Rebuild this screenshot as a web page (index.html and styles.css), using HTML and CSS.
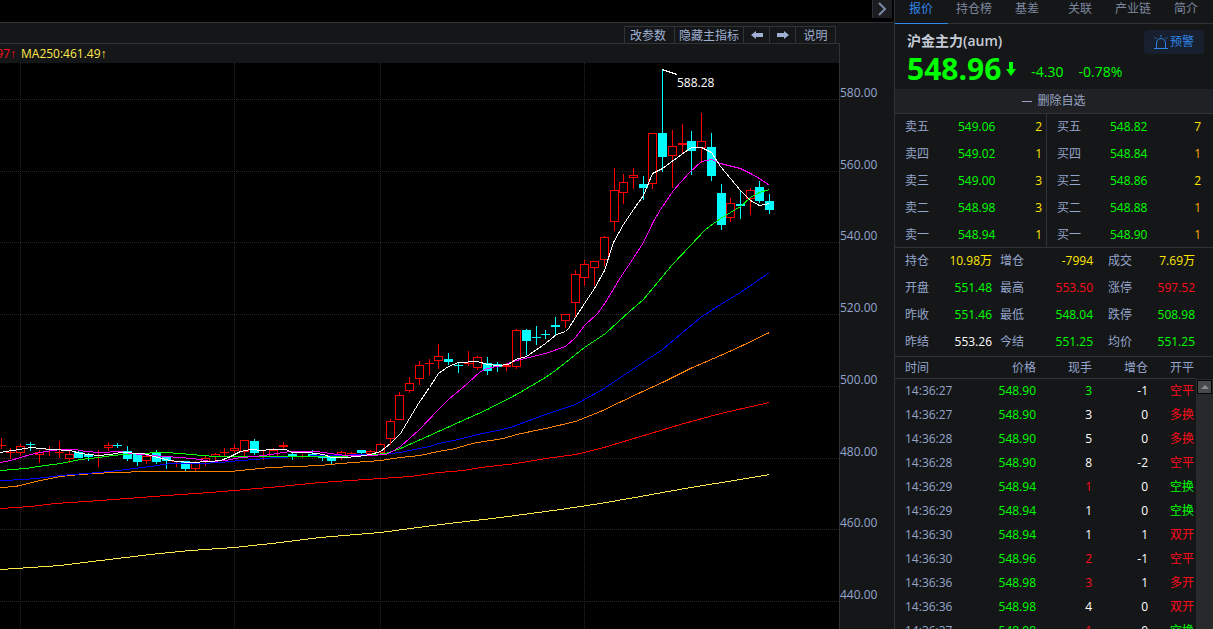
FILE: index.html
```html
<!DOCTYPE html>
<html lang="zh-CN">
<head>
<meta charset="utf-8">
<title>沪金主力(aum)</title>
<link rel="stylesheet" href="styles.css">
</head>
<body>
<main class="market">
  <div class="topbar">
    <button class="collapse" type="button" aria-label="收起">
      <svg width="10" height="14" viewBox="0 0 10 14"><path d="M1 1l6 6-6 6" fill="none" stroke="currentColor" stroke-width="2"/></svg>
    </button>
  </div>
  <div class="workspace">
    <section class="board">
      <div class="toolbar">
        <button type="button">改参数</button>
        <button type="button">隐藏主指标</button>
        <button class="arrow" type="button" aria-label="向左">
          <svg width="12" height="8" viewBox="0 0 12 8"><path d="M0 4l5-4v2h7v4H5v2z" fill="currentColor"/></svg>
        </button>
        <button class="arrow" type="button" aria-label="向右">
          <svg width="12" height="8" viewBox="0 0 12 8"><path d="M12 4L7 0v2H0v4h7v2z" fill="currentColor"/></svg>
        </button>
        <button class="help" type="button">说明</button>
      </div>
      <div class="legend">
        <span class="legend-cut up">97<i>↑</i></span>
        <span class="ma250">MA250:461.49<i>↑</i></span>
      </div>
      <div class="plot">
        <svg id="chart" class="chart" viewBox="0 63 839 566" preserveAspectRatio="xMaxYMin slice" role="img" aria-label="K线图">
          <g class="grid">
            <path d="M0 99.5H839M0 171.5H839M0 242.5H839M0 314.5H839M0 386.5H839M0 458.5H839M0 529.5H839M0 601.5H839"/>
            <path d="M20.5 63V629M234.5 63V629M380.5 63V629M584.5 63V629"/>
          </g>
          <g id="candles"></g>
          <g id="averages" class="averages"></g>
          <path class="peak-line" d="M662 69.5L677 74.5"/>
          <text class="peak-text" x="677" y="87">588.28</text>
        </svg>
      </div>
    </section>
    <div class="axis">
      <span>580.00</span><span>560.00</span><span>540.00</span><span>520.00</span>
      <span>500.00</span><span>480.00</span><span>460.00</span><span>440.00</span>
    </div>
  </div>
</main>

<aside class="panel">
  <nav class="tabs">
    <a class="active" href="#">报价</a><a href="#">持仓榜</a><a href="#">基差</a><a href="#">关联</a><a href="#">产业链</a><a href="#">简介</a>
  </nav>
  <header class="quote">
    <div class="quote-top">
      <h1>沪金主力(aum)</h1>
      <button class="alert" type="button">
        <svg width="14" height="14" viewBox="0 0 14 14" fill="none" stroke="currentColor"><path d="M0 13.500h14M2.500 13V8a4.500 4.500 0 0 1 9 0V13M7 0v2M1 2.500l1.500 1.500M13 2.500L11.500 4"/></svg>
        <span>预警</span>
      </button>
    </div>
    <div class="quote-price">
      <strong>548.96</strong>
      <svg width="10" height="14" viewBox="0 0 10 14"><path d="M3 0h4v7h3l-5 7-5-7h3z" fill="currentColor"/></svg>
      <span class="change">-4.30</span>
      <span class="change">-0.78%</span>
    </div>
  </header>
  <button class="remove" type="button"><span class="dash"></span>删除自选</button>

  <div class="depth">
    <table>
      <tr><th>卖五</th><td class="down">549.06</td><td class="vol">2</td></tr>
      <tr><th>卖四</th><td class="down">549.02</td><td class="vol">1</td></tr>
      <tr><th>卖三</th><td class="down">549.00</td><td class="vol">3</td></tr>
      <tr><th>卖二</th><td class="down">548.98</td><td class="vol">3</td></tr>
      <tr><th>卖一</th><td class="down">548.94</td><td class="vol">1</td></tr>
    </table>
    <table>
      <tr><th>买五</th><td class="down">548.82</td><td class="vol">7</td></tr>
      <tr><th>买四</th><td class="down">548.84</td><td class="vol amber">1</td></tr>
      <tr><th>买三</th><td class="down">548.86</td><td class="vol">2</td></tr>
      <tr><th>买二</th><td class="down">548.88</td><td class="vol amber">1</td></tr>
      <tr><th>买一</th><td class="down">548.90</td><td class="vol amber">1</td></tr>
    </table>
  </div>

  <dl class="stats">
    <div><dt>持仓</dt><dd class="vol">10.98万</dd></div>
    <div><dt>增仓</dt><dd class="vol">-7994</dd></div>
    <div><dt>成交</dt><dd class="vol">7.69万</dd></div>
    <div><dt>开盘</dt><dd class="down">551.48</dd></div>
    <div><dt>最高</dt><dd class="up">553.50</dd></div>
    <div><dt>涨停</dt><dd class="up">597.52</dd></div>
    <div><dt>昨收</dt><dd class="down">551.46</dd></div>
    <div><dt>最低</dt><dd class="down">548.04</dd></div>
    <div><dt>跌停</dt><dd class="down">508.98</dd></div>
    <div><dt>昨结</dt><dd class="flat">553.26</dd></div>
    <div><dt>今结</dt><dd class="down">551.25</dd></div>
    <div><dt>均价</dt><dd class="down">551.25</dd></div>
  </dl>

  <div class="trades">
    <table>
      <thead>
        <tr><th>时间</th><th>价格</th><th>现手</th><th>增仓</th><th>开平</th></tr>
      </thead>
      <tbody>
        <tr><td>14:36:27</td><td class="down">548.90</td><td class="down">3</td><td>-1</td><td class="up">空平</td></tr>
        <tr><td>14:36:27</td><td class="down">548.90</td><td>3</td><td>0</td><td class="up">多换</td></tr>
        <tr><td>14:36:28</td><td class="down">548.90</td><td>5</td><td>0</td><td class="up">多换</td></tr>
        <tr><td>14:36:28</td><td class="down">548.90</td><td>8</td><td>-2</td><td class="up">空平</td></tr>
        <tr><td>14:36:29</td><td class="down">548.94</td><td class="up">1</td><td>0</td><td class="down">空换</td></tr>
        <tr><td>14:36:29</td><td class="down">548.94</td><td>1</td><td>0</td><td class="down">空换</td></tr>
        <tr><td>14:36:30</td><td class="down">548.94</td><td>1</td><td>1</td><td class="up">双开</td></tr>
        <tr><td>14:36:30</td><td class="down">548.96</td><td class="up">2</td><td>-1</td><td class="up">空平</td></tr>
        <tr><td>14:36:36</td><td class="down">548.98</td><td class="up">3</td><td>1</td><td class="up">多开</td></tr>
        <tr><td>14:36:36</td><td class="down">548.98</td><td>4</td><td>0</td><td class="up">双开</td></tr>
        <tr><td>14:36:37</td><td class="down">548.98</td><td class="up">1</td><td>0</td><td class="down">空换</td></tr>
      </tbody>
    </table>
    <div class="scrollbar">
      <button type="button" aria-label="向上滚动"><svg width="8" height="4" viewBox="0 0 8 4"><path d="M4 0l4 4H0z" fill="currentColor"/></svg></button>
    </div>
  </div>
</aside>
<script src="chart.js"></script>
</body>
</html>
```
FILE: styles.css
```css
* { box-sizing: border-box; }

body {
  margin: 0;
  height: 100vh;
  display: flex;
  overflow: hidden;
  background: #151618;
  color: #94a5cb;
  font: 12px/14px "Open Sans", "Noto Sans CJK SC", sans-serif;
}

button {
  font: inherit;
  color: inherit;
  margin: 0;
  padding: 0;
  border: 0;
  background: none;
  display: flex;
  align-items: center;
  justify-content: center;
}

svg { display: block; flex: none; }
table { border-collapse: collapse; }
th, td { padding: 0; font-weight: 400; }

.up { color: #fc0d1b; }
.down { color: #00ff00; }
.flat { color: #fff; }
.vol { color: #ffe600; }
.vol.amber { color: #ffa800; }

/* chart side */
.market { flex: 1; min-width: 0; display: flex; flex-direction: column; }

.topbar {
  height: 23px;
  flex: none;
  background: #000;
  border-bottom: 1px solid #2f3237;
  display: flex;
  justify-content: flex-end;
  align-items: flex-start;
  padding-right: 2px;
}
.collapse { width: 20px; height: 18px; background: #1c1d20; border-left: 1px solid #303238; color: #7b89a8; }

.workspace { flex: 1; min-height: 0; display: flex; }
.board { flex: 1; min-width: 0; display: flex; flex-direction: column; }

.toolbar {
  height: 21px;
  flex: none;
  padding: 3px 4px 0 0;
  display: flex;
  justify-content: flex-end;
  border-bottom: 1px solid #2f3237;
}
.toolbar button {
  padding: 1px 4px 0;
  border: 1px solid #2f3237;
  border-width: 1px 0 0 1px;
  color: #9fb0d3;
}
.toolbar button:first-child { padding: 1px 8px 0 5px; }
.toolbar .arrow { width: 26px; padding: 0; }
.toolbar .help { width: 41px; border-right-width: 1px; }

.legend {
  height: 19px;
  flex: none;
  display: flex;
  align-items: center;
  gap: 5px;
  border-right: 1px solid #2f3237;
}
.legend-cut { width: 16px; overflow: hidden; display: flex; justify-content: flex-end; }
.legend i { font-family: "Liberation Sans", sans-serif; font-style: normal; }
.ma250 { color: #ffe84a; }

.plot { flex: 1; min-height: 0; background: #000; border-right: 1px solid #2f3237; }
.chart { width: 100%; height: 100%; }
.grid { fill: none; stroke: #25252b; stroke-dasharray: 1 1; }
.averages { fill: none; shape-rendering: crispEdges; }
.hollow { fill: #000; stroke: #f00; shape-rendering: crispEdges; }
.solid { fill: #0ff; stroke: #0ff; shape-rendering: crispEdges; }
.peak-line { stroke: #fff; shape-rendering: crispEdges; }
.peak-text { fill: #fff; }

.axis {
  width: 54px;
  flex: none;
  padding: 63px 0 27px;
  display: flex;
  flex-direction: column;
  justify-content: space-between;
}

/* quote side */
.panel {
  width: 319px;
  flex: none;
  border-left: 1px solid #2f3237;
  display: flex;
  flex-direction: column;
}

.tabs { height: 24px; flex: none; display: flex; border-bottom: 1px solid #2f3237; }
.tabs a {
  flex: 1;
  height: 24px;
  padding: 2px 1px 0 0;
  text-align: center;
  text-decoration: none;
  color: #7d879f;
}
.tabs .active { color: #3286e8; border-bottom: 1px solid #3286e8; }

.quote { height: 65px; flex: none; padding: 6px 9px 0 12px; }
.quote-top { height: 24px; display: flex; justify-content: space-between; }
.quote h1 { margin: 0; font-size: 14px; line-height: 22px; color: #c6ccd8; font-weight: 600; }
.alert { width: 60px; height: 24px; border-radius: 4px; background: #18202f; color: #2e84e6; gap: 2px; }
.quote-price { height: 30px; display: flex; align-items: center; color: #00ff00; font-size: 14px; }
.quote-price strong { font-size: 30px; line-height: 30px; margin-right: 5px; }
.change { margin: 6px 0 0 15px; }

.remove { height: 24px; flex: none; gap: 5px; color: #98a5c2; background: #202125; }
.dash { width: 10px; height: 1px; background: #98a5c2; }

.depth { display: flex; border: 1px solid #2f3237; border-width: 1px 0; }
.depth table { flex: 1; margin: 0 12px 0 10px; table-layout: fixed; }
.depth table:first-child { flex: none; width: 152px; margin: 0; border-right: 1px solid #2f3237; }
.depth th { width: 53px; text-align: left; }
.depth table:first-child th { width: 63px; padding-left: 10px; }
.depth td:last-child { text-align: right; }
.depth table:first-child td:last-child { padding-right: 4px; }
.depth th, .depth td { line-height: 25px; padding-bottom: 2px; }
.depth tr:last-child > * { padding-bottom: 0; }

.stats {
  margin: 0;
  padding: 0 18px 2px 10px;
  display: grid;
  grid-template-columns: 87fr 100fr 87fr;
  gap: 2px 8px;
  line-height: 25px;
  border-bottom: 1px solid #2f3237;
}
.stats div { display: flex; justify-content: space-between; }
.stats div:nth-child(3n + 2) { padding-right: 7px; }
.stats dd { margin: 0; }

.trades { flex: 1; min-height: 0; display: flex; overflow: hidden; align-items: flex-start; }
.trades table { flex: 1; table-layout: fixed; }
.trades th { height: 21px; }
.trades thead { border-bottom: 1px solid #2f3237; }
.trades td { height: 24px; }
.trades th, .trades td { text-align: right; padding: 2px 2px 0 0; }
.trades tr > :nth-child(1) { width: 70px; padding-left: 10px; text-align: left; }
.trades tr > :nth-child(2) { width: 73px; }
.trades tr > :nth-child(3), .trades tr > :nth-child(4) { width: 56px; }
.trades tr > :nth-child(5) { width: 46px; }
.trades td:nth-child(3):not([class]), .trades td:nth-child(4) { color: #fff; }
.scrollbar { width: 17px; align-self: stretch; margin-top: 22px; padding: 1px 0 0 1px; background: #28292a; }
.scrollbar button { width: 15px; height: 14px; border: 1px solid #050505; background: #48494b; color: #8b8c8e; }
```
FILE: chart.js
```js
// [high, body top, body bottom, low, rising]
const bars = [
  [438,445,445,448,1],[448,452,452,458,1],[444,446,452,455,1],[442,444,444,450,0],[450,452,454,462,1],
  [446,449,449,455,1],[441,452,452,457,1],[450,454,458,462,1],[451,452,457,457,0],[453,454,456,460,0],
  [450,455,455,466,1],[442,445,447,450,1],[443,445,445,447,0],[446,451,458,460,0],[453,454,461,465,0],
  [454,456,460,463,1],[450,452,461,463,0],[456,456,460,468,0],[461,461,461,466,1],[461,461,468,471,0],
  [461,462,468,471,1],[456,458,461,465,1],[453,454,456,461,1],[448,452,452,456,1],[444,448,450,452,1],
  [440,440,451,455,1],[439,441,452,454,0],[451,456,456,459,1],[448,450,456,457,1],[442,445,446,449,1],
  [452,454,455,459,0],[454,456,456,457,1],[450,454,455,456,0],[454,457,457,460,0],[455,457,460,463,0],
  [451,452,455,459,1],[452,453,453,456,1],[450,450,452,454,0],[450,451,453,454,1],[443,444,452,452,1],
  [419,421,438,444,1],[392,395,419,419,1],[377,383,390,392,1],[361,365,378,384,1],[359,363,363,374,1],
  [344,356,360,368,1],[353,359,361,364,0],[363,365,365,372,0],[351,363,363,365,1],[356,357,367,369,1],
  [357,363,370,374,0],[362,364,366,371,0],[363,365,366,370,1],[329,330,366,368,1],[329,330,340,354,0],
  [326,337,337,344,0],[330,334,334,338,0],[317,325,326,334,0],[314,314,320,327,1],[270,274,302,316,1],
  [260,264,277,285,1],[261,261,267,285,1],[236,237,259,265,1],[168,190,221,230,1],[174,182,192,203,1],
  [168,175,177,188,1],[176,184,187,199,0],[133,133,183,188,1],[69,133,156,171,0],[130,146,155,187,1],
  [124,143,144,153,1],[131,141,150,174,0],[113,141,147,162,1],[133,147,175,180,0],[184,193,224,229,0],
  [198,203,217,221,1],[190,204,205,218,0],[188,190,198,214,1],[181,187,200,202,0],[194,201,209,213,0]
];

const averages = {
  '#ffe84a': '0,569 60,565 100,560 150,554 190,550 234,547 280,542 320,537 380,532 440,524 500,517 560,509 600,503 640,496 690,487 740,479 769,474',
  '#ff0000': '0,508 30,506 55,503 100,500 140,497 180,494 210,492 245,489 280,486 320,482 350,480 380,478 410,476 438,472 463,470 480,467 516,463 545,458 575,454 600,448 640,436 680,424 720,413 769,402',
  '#ff8000': '0,487 15,486 40,480 60,476 80,474 112,472 150,471 230,471 250,469 270,467 320,465 340,463 380,460 400,457 419,455 438,451 455,448 468,444 477,442 503,438 516,434 545,428 575,421 600,411 640,392 662,382 690,368 720,355 740,346 769,332',
  '#0000ff': '0,480 25,479 45,477 60,475 85,473 110,471 125,469 150,466 170,463 200,463 220,462 240,460 255,459 275,457 300,456 320,455 380,454 400,452 409,450 429,446 438,443 458,439 477,434 497,430 510,427 526,421 545,414 575,404 602,389 629,371 662,349 700,317 720,304 740,292 769,272',
  '#00ff00': '0,470 25,468 45,465 60,463 80,459 98,457 112,455 135,453 165,452 180,453 190,454 215,456 330,456 365,455 385,453 400,448 409,444 438,431 458,422 487,409 516,394 545,377 555,370 584,347 605,333 629,311 643,299 672,264 690,245 705,229 720,218 740,206 750,197 759,192 769,189',
  '#ff00ff': '0,462 10,460 30,454 45,451 60,449 75,449 85,451 100,452 120,451 130,453 150,455 165,456 180,457 200,459 210,461 225,460 240,457 255,456 270,454 290,451 316,451 330,453 345,455 370,455 385,454 390,452 400,446 409,438 419,429 438,409 448,399 467,383 480,371 487,368 505,364 516,360 545,353 565,346 575,337 584,325 597,313 605,302 620,277 632,259 643,242 653,221 660,209 673,190 688,173 701,161 711,159 720,163 740,168 750,173 759,178 769,185',
  '#ffffff': '0,452 12,450 25,448 30,447 50,449 70,450 80,453 98,455 110,454 120,452 143,453 150,455 165,459 176,461 190,462 210,461 220,460 228,457 240,451 250,449 262,450 270,449 285,449 292,452 308,452 323,454 331,457 345,457 357,456 370,454 380,451 390,443 400,433 418,403 429,387 438,373 448,366 458,362 477,361 487,364 497,365 508,364 515,359 526,356 545,343 556,334 565,331 568,328 584,303 594,288 604,270 613,242 623,224 633,209 643,195 652,173 662,168 681,154 691,147 701,147 711,152 720,166 730,178 740,190 750,200 759,205 769,203'
};

const NS = 'http://www.w3.org/2000/svg';

function add(parent, tag, attrs) {
  const el = document.createElementNS(NS, tag);
  for (const name in attrs) el.setAttribute(name, attrs[name]);
  parent.appendChild(el);
}

const candles = document.getElementById('candles');
bars.forEach(([high, top, bottom, low, rising], i) => {
  const x = Math.round(380 + 9.73 * (i - 39)) + 0.5;
  const body = top === bottom
    ? `M${x - 4.5} ${top + 0.5}h9`
    : `M${x - 4} ${top + 0.5}h8V${bottom + 0.5}h-8z`;
  add(candles, 'path', {
    class: rising ? 'hollow' : 'solid',
    d: `M${x} ${high}V${top}M${x} ${bottom}V${low + 1}${body}`
  });
});

const lines = document.getElementById('averages');
for (const color in averages) {
  const points = averages[color].replace(/\d+/g, n => +n + 0.5);
  add(lines, 'polyline', { points, stroke: color });
}
```
